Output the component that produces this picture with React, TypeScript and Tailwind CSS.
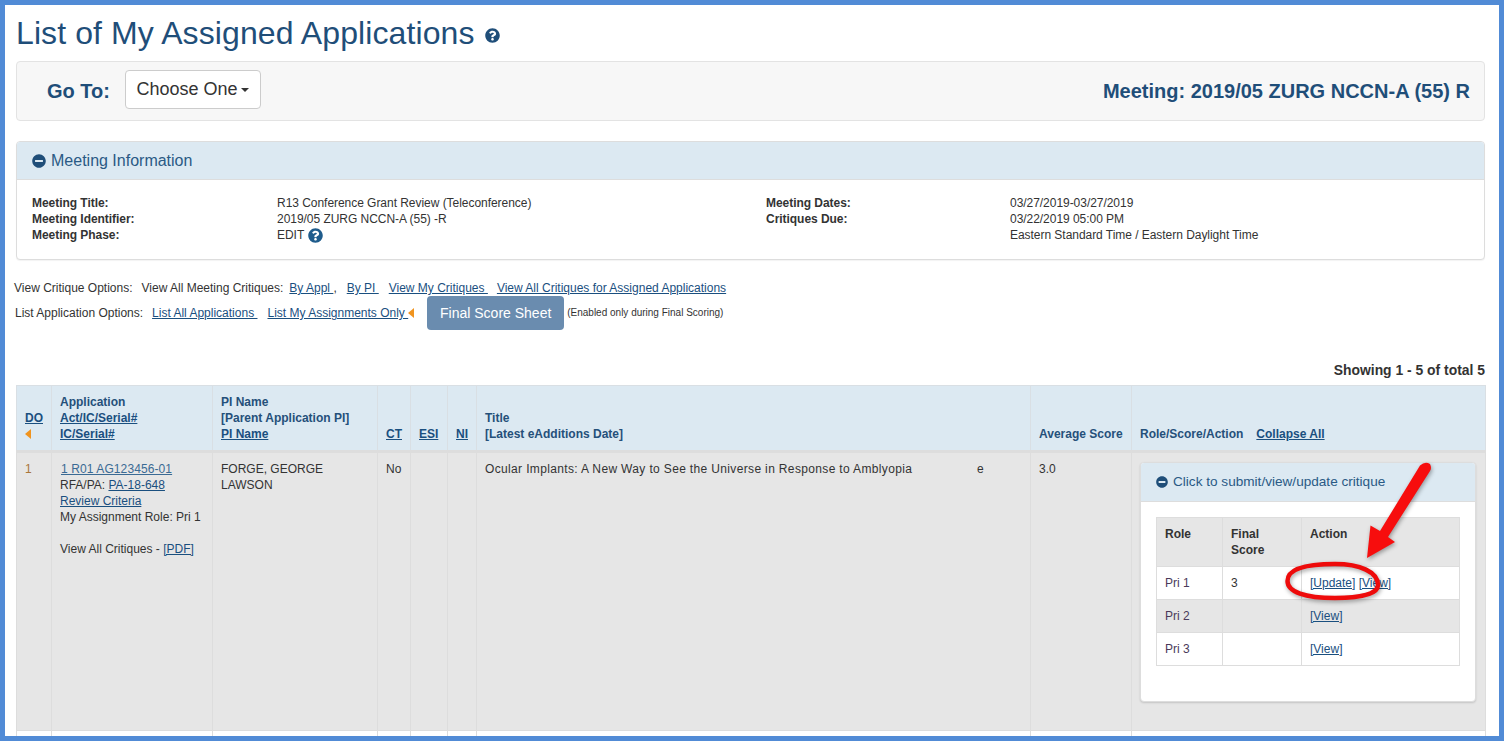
import React from "react";
import { FaMinusCircle, FaQuestionCircle } from "react-icons/fa";

const Tri = () => (
  <svg width="6" height="10" viewBox="0 0 6 10" className="inline-block align-[-1px]">
    <path d="M6 0V10L0 5Z" fill="#f0941f" />
  </svg>
);

const A = ({ children }: { children: React.ReactNode }) => (
  <a className="text-[#1a4f7f] underline">{children}</a>
);

const Th = ({ children }: { children: React.ReactNode }) => (
  <th className="border border-[#d9dfe4] border-b-[3px] border-b-[#dddddd] bg-[#dce9f2] px-2 py-2 text-left align-bottom font-bold text-[#25507a]">
    {children}
  </th>
);

const Td = ({ children }: { children?: React.ReactNode }) => (
  <td className="border border-[#dddddd] p-2 align-top">{children}</td>
);

const critiqueRows = [
  { role: "Pri 1", score: "3", update: true, bg: "bg-white" },
  { role: "Pri 2", score: "", update: false, bg: "bg-[#e6e6e6]" },
  { role: "Pri 3", score: "", update: false, bg: "bg-white" },
];

export default function App() {
  return (
    <div className="relative h-[741px] w-[1504px] overflow-hidden border-[5px] border-[#518bd6] bg-white font-['Liberation_Sans',Arial,sans-serif] text-[12px] leading-4 text-[#333333]">
      <div className="flex h-full flex-col pl-[11px] pr-[14px]">
        <h1 className="mt-[8px] flex h-[40px] items-center text-[32px] leading-[40px] font-normal tracking-[0.1px] text-[#1f4e79]">
          List of My Assigned Applications
          <FaQuestionCircle className="ml-[10px] mt-[5px] text-[15px] text-[#1f4e79]" />
        </h1>

        <div className="mt-[8px] flex h-[60px] shrink-0 items-start justify-between rounded border border-[#e3e3e3] bg-[#f7f7f7] pl-[30px] pr-[14px]">
          <div className="flex items-center pt-[8px]">
            <span className="mt-[2px] text-[20px] font-bold text-[#1f4e79]">Go To:</span>
            <button className="ml-[15px] flex h-[39px] w-[136px] items-center justify-center rounded border border-[#cccccc] bg-white pb-[2px] text-[18px] text-[#333333]">
              Choose One
              <span className="ml-[4px] mt-[2px] h-0 w-0 border-x-[4px] border-t-[4px] border-x-transparent border-t-[#333333]" />
            </button>
          </div>
          <div className="pt-[17px] text-[20px] leading-[24px] font-bold text-[#1f4e79]">
            Meeting: 2019/05 ZURG NCCN-A (55) R
          </div>
        </div>

        <div className="mt-[20px] shrink-0 overflow-hidden rounded border border-[#dddddd] bg-white shadow-[0_1px_1px_rgba(0,0,0,0.05)]">
          <div className="flex h-[38px] items-center border-b border-[#dddddd] bg-[#dce9f2] pl-[15px] text-[16px] text-[#2a5a85]">
            <FaMinusCircle className="mr-[5px] text-[14px] text-[#1f4e79]" />
            Meeting Information
          </div>
          <div className="grid h-[79px] grid-cols-[245px_489px_244px_1fr] pl-[15px] pt-[15px] tracking-[-0.04px]">
            <div className="font-bold">
              <div>Meeting Title:</div>
              <div>Meeting Identifier:</div>
              <div>Meeting Phase:</div>
            </div>
            <div>
              <div>R13 Conference Grant Review (Teleconference)</div>
              <div>2019/05 ZURG NCCN-A (55) -R</div>
              <div className="flex items-center">
                EDIT
                <FaQuestionCircle className="ml-[4px] mt-[1px] text-[15px] text-[#1f5c8c]" />
              </div>
            </div>
            <div className="font-bold">
              <div>Meeting Dates:</div>
              <div>Critiques Due:</div>
            </div>
            <div>
              <div>03/27/2019-03/27/2019</div>
              <div>03/22/2019 05:00 PM</div>
              <div>Eastern Standard Time / Eastern Daylight Time</div>
            </div>
          </div>
        </div>

        <div className="-ml-[2px] mt-[20px] flex h-[16px] shrink-0 items-center whitespace-pre">
          <span>View Critique Options:</span>
          <span className="ml-[9px]">View All Meeting Critiques:</span>
          <span className="ml-[6px]"><A>By Appl </A>,</span>
          <span className="ml-[10px]"><A>By PI </A></span>
          <span className="ml-[10px]"><A>View My Critiques </A></span>
          <span className="ml-[9px]"><A>View All Critiques for Assigned Applications</A></span>
        </div>

        <div className="-ml-[1px] flex h-[34px] shrink-0 items-center whitespace-pre">
          <span>List Application Options:</span>
          <span className="ml-[9px]"><A>List All Applications </A></span>
          <span className="ml-[10px]"><A>List My Assignments Only </A></span>
          <Tri />
          <button className="ml-[13px] h-[34px] w-[137px] rounded bg-[#6a8caf] text-center text-[14px] text-white">
            Final Score Sheet
          </button>
          <span className="ml-[3px] text-[10px]">(Enabled only during Final Scoring)</span>
        </div>

        <div className="mt-[32px] h-[16px] shrink-0 text-right text-[13.9px] font-bold">
          Showing 1 - 5 of total 5
        </div>

        <table className="mt-[7px] w-[1469px] shrink-0 table-fixed border-collapse">
          <colgroup>
            <col className="w-[35px]" />
            <col className="w-[161px]" />
            <col className="w-[165px]" />
            <col className="w-[33px]" />
            <col className="w-[37px]" />
            <col className="w-[29px]" />
            <col className="w-[554px]" />
            <col className="w-[101px]" />
            <col className="w-[354px]" />
          </colgroup>
          <thead>
            <tr>
              <Th>
                <A>DO</A>
                <div className="h-4"><Tri /></div>
              </Th>
              <Th>
                <div>Application</div>
                <div><A>Act/IC/Serial# </A></div>
                <div><A>IC/Serial#</A></div>
              </Th>
              <Th>
                <div>PI Name</div>
                <div>[Parent Application PI]</div>
                <div><A>PI Name</A></div>
              </Th>
              <Th><A>CT</A></Th>
              <Th><A>ESI</A></Th>
              <Th><A>NI</A></Th>
              <Th>
                <div>Title</div>
                <div>[Latest eAdditions Date]</div>
              </Th>
              <Th>Average Score</Th>
              <Th>
                Role/Score/Action
                <span className="ml-[13px]"><A>Collapse All</A></span>
              </Th>
            </tr>
          </thead>
          <tbody>
            <tr className="h-[279px] bg-[#e6e6e6]">
              <Td><span className="text-[#a9763a]">1</span></Td>
              <Td>
                <div className="pl-px tracking-[0.1px]"><a className="text-[#3a6a94] underline">1 R01 AG123456-01</a></div>
                <div>RFA/PA: <A>PA-18-648 </A></div>
                <div><A>Review Criteria</A></div>
                <div>My Assignment Role: Pri 1</div>
                <div className="mt-4">View All Critiques - <A>[PDF]</A></div>
              </Td>
              <Td>FORGE, GEORGE LAWSON</Td>
              <Td>No</Td>
              <Td />
              <Td />
              <Td>
                <div className="flex justify-between pr-[38px] tracking-[0.35px]">
                  <span>Ocular Implants: A New Way to See the Universe in Response to Amblyopia</span>
                  <span>e</span>
                </div>
              </Td>
              <Td>3.0</Td>
              <Td>
                <div className="mr-[1px] mt-[1px] h-[240px] overflow-hidden rounded border border-[#dddddd] bg-white shadow-[0_1px_2px_rgba(0,0,0,0.15)]">
                  <div className="flex h-[39px] items-center border-b border-[#dddddd] bg-[#dce9f2] pl-[15px] text-[13.6px] text-[#2a5a85]">
                    <FaMinusCircle className="mr-[5px] text-[12px] text-[#1f4e79]" />
                    Click to submit/view/update critique
                  </div>
                  <table className="ml-[15px] mt-[15px] w-[303px] table-fixed border-collapse">
                    <colgroup>
                      <col className="w-[66px]" />
                      <col className="w-[79px]" />
                      <col className="w-[158px]" />
                    </colgroup>
                    <thead>
                      <tr className="bg-[#e6e6e6] text-left">
                        <th className="border border-[#dddddd] p-2 align-top font-bold">Role</th>
                        <th className="border border-[#dddddd] p-2 align-top font-bold">Final Score</th>
                        <th className="border border-[#dddddd] p-2 align-top font-bold">Action</th>
                      </tr>
                    </thead>
                    <tbody>
                      {critiqueRows.map((r) => (
                        <tr key={r.role} className={r.bg}>
                          <td className="border border-[#dddddd] p-2 text-[#4a3a5a]">{r.role}</td>
                          <td className="border border-[#dddddd] p-2">{r.score}</td>
                          <td className="border border-[#dddddd] p-2">
                            {r.update && (<><A>[Update]</A>{" "}</>)}
                            <A>[View]</A>
                          </td>
                        </tr>
                      ))}
                    </tbody>
                  </table>
                </div>
              </Td>
            </tr>
            <tr className="h-[40px] bg-white">
              <Td /><Td /><Td /><Td /><Td /><Td /><Td /><Td /><Td />
            </tr>
          </tbody>
        </table>
      </div>

      <svg
        className="pointer-events-none absolute left-[-5px] top-[-5px] drop-shadow-[1px_2px_2px_rgba(0,0,0,0.35)]"
        width="1504"
        height="741"
        viewBox="0 0 1504 741"
      >
        <path
          d="M1420 465.5Q1425 461 1430 464Q1432 468 1430 471L1388 537L1395 542L1367 558L1370.5 525.5L1380 531Z"
          fill="#f70d0d"
        />
        <path
          d="M1287.5 581C1287.5 570 1303 564 1335 564C1360 564 1378 572 1378 585C1378 594 1360 598 1335 598C1305 598 1287.5 592 1287.5 581Z"
          fill="none"
          stroke="#ee0b0b"
          strokeWidth="4.5"
        />
      </svg>
    </div>
  );
}
